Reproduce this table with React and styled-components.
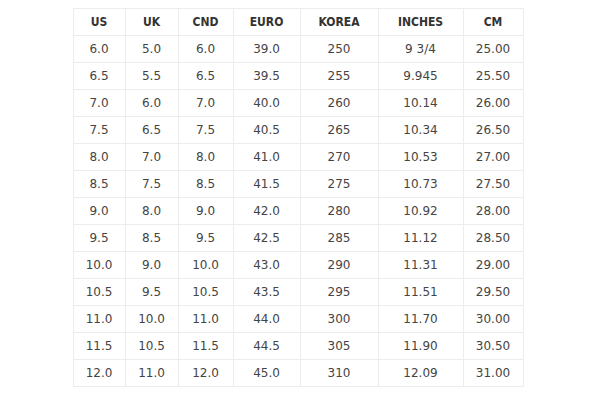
import React from 'react';
import styled, { createGlobalStyle } from 'styled-components';

const GlobalStyle = createGlobalStyle`
  html, body {
    margin: 0;
    padding: 0;
    background: #ffffff;
  }
  body {
    font-family: "DejaVu Sans", Verdana, sans-serif;
  }
`;

const Page = styled.div`
  width: 600px;
  height: 400px;
  display: flex;
  justify-content: center;
  align-items: flex-start;
  padding-top: 8px;
  box-sizing: border-box;
`;

const Table = styled.table`
  border-collapse: collapse;
  margin-left: -4px;
  border: 1px solid #ececec;
  table-layout: fixed;
  width: 450px;
`;

const Row = styled.tr`
  height: 27px;
`;

const HeadCell = styled.th`
  padding: 0;
  line-height: 14px;
  text-align: center;
  font-family: "DejaVu Sans Condensed", "DejaVu Sans", sans-serif;
  font-weight: bold;
  font-size: 12px;
  color: #333333;
  border: 1px solid #ececec;
  width: ${p => p.$w}px;
`;

const Cell = styled.td`
  padding: 0;
  line-height: 14px;
  text-align: center;
  font-size: 12px;
  color: #444444;
  border: 1px solid #ececec;
`;

const columns = [
  { label: 'US', w: 51 },
  { label: 'UK', w: 52 },
  { label: 'CND', w: 54 },
  { label: 'EURO', w: 66 },
  { label: 'KOREA', w: 77 },
  { label: 'INCHES', w: 84 },
  { label: 'CM', w: 59 },
];

const rows = [
  ['6.0', '5.0', '6.0', '39.0', '250', '9 3/4', '25.00'],
  ['6.5', '5.5', '6.5', '39.5', '255', '9.945', '25.50'],
  ['7.0', '6.0', '7.0', '40.0', '260', '10.14', '26.00'],
  ['7.5', '6.5', '7.5', '40.5', '265', '10.34', '26.50'],
  ['8.0', '7.0', '8.0', '41.0', '270', '10.53', '27.00'],
  ['8.5', '7.5', '8.5', '41.5', '275', '10.73', '27.50'],
  ['9.0', '8.0', '9.0', '42.0', '280', '10.92', '28.00'],
  ['9.5', '8.5', '9.5', '42.5', '285', '11.12', '28.50'],
  ['10.0', '9.0', '10.0', '43.0', '290', '11.31', '29.00'],
  ['10.5', '9.5', '10.5', '43.5', '295', '11.51', '29.50'],
  ['11.0', '10.0', '11.0', '44.0', '300', '11.70', '30.00'],
  ['11.5', '10.5', '11.5', '44.5', '305', '11.90', '30.50'],
  ['12.0', '11.0', '12.0', '45.0', '310', '12.09', '31.00'],
];

const App = () => {
  return (
    <>
      <GlobalStyle />
      <Page>
        <Table>
          <thead>
            <Row>
              {columns.map(c => (
                <HeadCell key={c.label} $w={c.w}>{c.label}</HeadCell>
              ))}
            </Row>
          </thead>
          <tbody>
            {rows.map((r, i) => (
              <Row key={i}>
                {r.map((v, j) => <Cell key={j}>{v}</Cell>)}
              </Row>
            ))}
          </tbody>
        </Table>
      </Page>
    </>
  );
};

export default App;
